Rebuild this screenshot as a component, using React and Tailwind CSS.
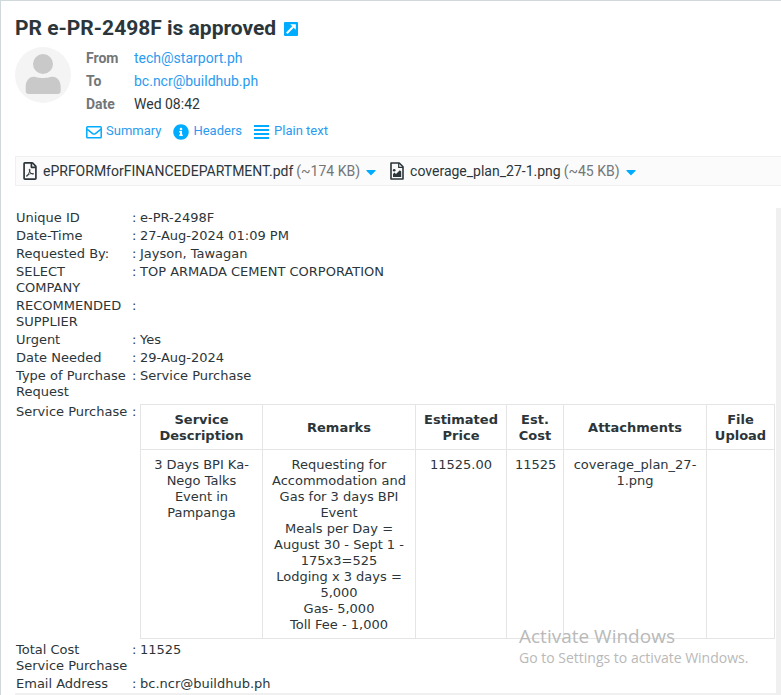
import React from 'react'
import { FaCaretDown, FaInfoCircle, FaRegFilePdf } from 'react-icons/fa'

const FileImageIcon = ({ className }) => (
  <svg className={className} viewBox="0 0 16 18" fill="none" aria-hidden="true">
    <path stroke="currentColor" strokeWidth="1.600" strokeLinejoin="round" d="M2 1h8.200L14 4.800V17H2z" />
    <path stroke="currentColor" strokeWidth="1.200" d="M9.700 1v4.300H14" />
    <circle cx="5.200" cy="8.200" r="1.300" fill="currentColor" />
    <path fill="currentColor" d="M4 15v-3l1.500-1.400L7 12l3.800-3.800L12.200 9.600V15z" />
  </svg>
)

const EnvelopeIcon = ({ className }) => (
  <svg className={className} viewBox="0 0 16 16" fill="none" stroke="currentColor" strokeWidth="1.500" aria-hidden="true">
    <rect x=".8" y="2.800" width="14.400" height="11" rx=".8" />
    <path d="M1 5.200l5.600 4.400c.9.600 1.900.6 2.800 0L15 5.200" />
  </svg>
)

const LinesIcon = ({ className }) => (
  <svg className={className} viewBox="0 0 16 16" fill="currentColor" aria-hidden="true">
    <path d="M0 1h15v2H0zM0 5h15v2H0zM0 9h15v2H0zM0 13h15v2H0z" />
  </svg>
)

const ExternalIcon = ({ className }) => (
  <svg className={className} viewBox="0 0 14 14" fill="none" aria-hidden="true">
    <rect width="14" height="14" rx="1" fill="currentColor" />
    <path stroke="#fff" strokeWidth="2" d="M2.800 11.200l6.400-6.400" />
    <path fill="#fff" d="M6.200 2.200h5.600v5.600z" />
  </svg>
)

const attachments = [
  { name: 'ePRFORMforFINANCEDEPARTMENT.pdf', size: '(~174 KB)', icon: FaRegFilePdf },
  { name: 'coverage_plan_27-1.png', size: '(~45 KB)', icon: FileImageIcon },
]

const detailsTop = [
  ['Unique ID', 'e-PR-2498F'],
  ['Date-Time', '27-Aug-2024 01:09 PM'],
  ['Requested By:', 'Jayson, Tawagan'],
  ['SELECT COMPANY', 'TOP ARMADA CEMENT CORPORATION'],
  ['RECOMMENDED SUPPLIER', ''],
  ['Urgent', 'Yes'],
  ['Date Needed', '29-Aug-2024'],
  ['Type of Purchase Request', 'Service Purchase'],
]

const detailsBottom = [
  ['Total Cost Service Purchase', '11525'],
  ['Email Address', 'bc.ncr@buildhub.ph'],
]

const remarks = [
  'Requesting for Accommodation and Gas for 3 days BPI Event',
  'Meals per Day = August 30 - Sept 1 - 175x3=525',
  'Lodging x 3 days = 5,000',
  'Gas- 5,000',
  'Toll Fee - 1,000',
]

const Avatar = () => (
  <svg className="w-14 h-14 shrink-0" viewBox="0 0 56 56" aria-hidden="true">
    <circle cx="28" cy="28" r="28" fill="#f4f4f4" />
    <circle cx="28" cy="17" r="10" fill="#c9c9c9" />
    <path
      fill="#c9c9c9"
      d="M18.500 29.800c2.800 0 4.500 1.300 9.500 1.300s6.700-1.300 9.500-1.300c5 0 8.200 4.500 8.200 10v4.200c0 1.800-1.200 3-3 3H13.700c-1.800 0-3-1.200-3-3v-4.200c0-5.500 3.200-10 7.800-10z"
    />
  </svg>
)

const MessageHeader = () => (
  <header className="pl-3.5 pt-[11px]">
    <h1 className="flex items-center gap-2 text-[21px] leading-8 font-bold">
      <span>PR e-PR-2498F is approved</span>
      <a href="#open" aria-label="Open in new window" className="mt-0.5 text-[#00acff]">
        <ExternalIcon className="w-3.5 h-3.5" />
      </a>
    </h1>

    <div className="flex gap-[15px] mt-[3px]">
      <Avatar />
      <div>
        <dl className="grid grid-cols-[48px_auto] text-sm leading-[23px]">
          <dt className="font-bold text-[#737677]">From</dt>
          <dd><a href="#from" className="text-[#2a9bf0]">tech@starport.ph</a></dd>
          <dt className="font-bold text-[#737677]">To</dt>
          <dd><a href="#to" className="text-[#2a9bf0]">bc.ncr@buildhub.ph</a></dd>
          <dt className="font-bold text-[#737677]">Date</dt>
          <dd>Wed 08:42</dd>
        </dl>
        <nav className="flex gap-3 mt-[3px] text-[13px] leading-6 text-[#2a9bf0]">
          <a href="#summary" className="flex items-center gap-1">
            <EnvelopeIcon className="w-4 h-4 mt-0.5 text-[#00acff]" />
            Summary
          </a>
          <a href="#headers" className="flex items-center gap-1">
            <FaInfoCircle className="w-4 h-4 mt-0.5 text-[#00acff]" />
            Headers
          </a>
          <a href="#plain" className="flex items-center gap-1">
            <LinesIcon className="w-4 h-4 mt-0.5 text-[#00acff]" />
            Plain text
          </a>
        </nav>
      </div>
    </div>
  </header>
)

const Attachments = () => (
  <ul className="flex flex-wrap gap-3 ml-3.5 mt-[13px] px-1.5 border border-r-0 border-[#f0f0f0] bg-[#fbfbfb] text-sm leading-7">
    {attachments.map(({ name, size, icon: Icon }) => (
      <li key={name} className="flex items-center">
        <a href="#attachment" className="flex items-center">
          <Icon className="w-4 h-[18px] mr-[5px]" />
          {name}
          <span className="ml-[3px] text-[#737677]">{size}</span>
        </a>
        <button type="button" aria-label="Attachment options" className="ml-[5px] mt-0.5 text-[#00acff]">
          <FaCaretDown className="w-3 h-4" />
        </button>
      </li>
    ))}
  </ul>
)

const DetailRow = ({ label, value }) => (
  <tr className="align-top">
    <th scope="row" className="p-px text-left font-normal">{label}</th>
    <td className="py-px">:</td>
    <td className="py-px">{value}</td>
  </tr>
)

const headCell = 'border border-[#e5e5e5] px-1.5 pt-[7px] pb-[5px] font-bold'
const bodyCell = 'border border-[#e5e5e5] px-2 pt-[7px] pb-[5px]'

const PurchaseTable = () => (
  <table className="w-full table-fixed border-collapse text-center">
    <colgroup>
      <col className="w-[122px]" />
      <col className="w-[153px]" />
      <col className="w-[91px]" />
      <col className="w-[57px]" />
      <col className="w-[143px]" />
      <col className="w-[68px]" />
    </colgroup>
    <thead>
      <tr>
        <th className={headCell}>Service Description</th>
        <th className={headCell}>Remarks</th>
        <th className={headCell}>Estimated Price</th>
        <th className={headCell}>Est. Cost</th>
        <th className={headCell}>Attachments</th>
        <th className={headCell}>File Upload</th>
      </tr>
    </thead>
    <tbody>
      <tr className="align-top">
        <td className={bodyCell}>3 Days BPI Ka-Nego Talks Event in Pampanga</td>
        <td className={bodyCell}>
          {remarks.map((line) => (
            <p key={line}>{line}</p>
          ))}
        </td>
        <td className={bodyCell}>11525.00</td>
        <td className={bodyCell}>11525</td>
        <td className={bodyCell}>coverage_plan_27-1.png</td>
        <td className={bodyCell}></td>
      </tr>
    </tbody>
  </table>
)

const MessageBody = () => (
  <main className="ml-3.5 mt-[22px] pt-px border-r-[5px] border-b-[3px] border-[#f0f0f0] font-[Verdana,'DejaVu_Sans',sans-serif] text-[13px] leading-4">
    <table className="w-full table-fixed border-collapse">
      <colgroup>
        <col className="w-[117px]" />
        <col className="w-2" />
        <col />
      </colgroup>
      <tbody>
        {detailsTop.map(([label, value]) => (
          <DetailRow key={label} label={label} value={value} />
        ))}
        <tr className="align-top">
          <th scope="row" className="px-px py-[3px] text-left font-normal">Service Purchase</th>
          <td className="py-[3px]">:</td>
          <td className="pt-[3px] pr-px pb-0.5">
            <PurchaseTable />
          </td>
        </tr>
        {detailsBottom.map(([label, value]) => (
          <DetailRow key={label} label={label} value={value} />
        ))}
      </tbody>
    </table>
  </main>
)

const App = () => {
  return (
    <div className="relative min-h-screen bg-white border-t border-l border-[#d0d8dc] font-[Roboto,sans-serif] text-[#2c363a]">
      <MessageHeader />
      <Attachments />
      <MessageBody />

      {/* OS activation notice, floats over the page */}
      <aside className="absolute right-6 bottom-7 w-[238px] font-['Segoe_UI','Open_Sans',sans-serif] text-[#b9b9b9] whitespace-nowrap pointer-events-none">
        <p className="text-[19px] leading-6">Activate Windows</p>
        <p className="text-sm leading-5">Go to Settings to activate Windows.</p>
      </aside>
    </div>
  )
}

export default App
